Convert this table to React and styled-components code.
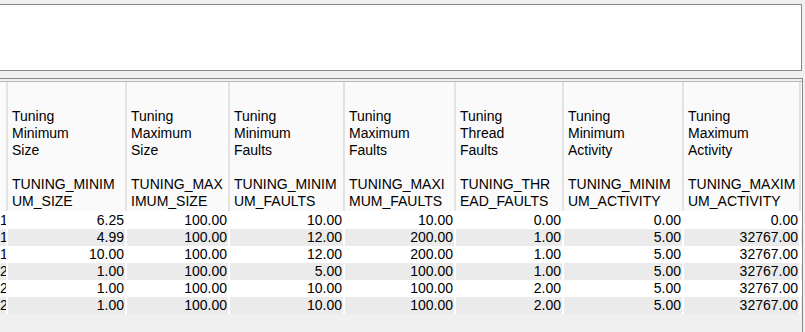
import React from "react";
import styled, { createGlobalStyle } from "styled-components";

const GlobalStyle = createGlobalStyle`
    html, body {
        margin: 0;
        padding: 0;
        background: #f0f0f0;
        overflow: hidden;
    }
    #root {
        width: 805px;
        height: 332px;
    }
`;

const COLUMNS = [
    { width: 8, title: `` },
    { width: 119, title: `Tuning\nMinimum\nSize\n\nTUNING_MINIM\nUM_SIZE` },
    { width: 103, title: `Tuning\nMaximum\nSize\n\nTUNING_MAX\nIMUM_SIZE` },
    { width: 115, title: `Tuning\nMinimum\nFaults\n\nTUNING_MINIM\nUM_FAULTS` },
    { width: 111, title: `Tuning\nMaximum\nFaults\n\nTUNING_MAXI\nMUM_FAULTS` },
    { width: 108, title: `Tuning\nThread\nFaults\n\nTUNING_THR\nEAD_FAULTS` },
    { width: 120, title: `Tuning\nMinimum\nActivity\n\nTUNING_MINIM\nUM_ACTIVITY` },
    { width: 117, title: `Tuning\nMaximum\nActivity\n\nTUNING_MAXIM\nUM_ACTIVITY` },
];

const ROWS = [
    [`1`, `6.25`, `100.00`, `10.00`, `10.00`, `0.00`, `0.00`, `0.00`],
    [`1`, `4.99`, `100.00`, `12.00`, `200.00`, `1.00`, `5.00`, `32767.00`],
    [`1`, `10.00`, `100.00`, `12.00`, `200.00`, `1.00`, `5.00`, `32767.00`],
    [`2`, `1.00`, `100.00`, `5.00`, `100.00`, `1.00`, `5.00`, `32767.00`],
    [`2`, `1.00`, `100.00`, `10.00`, `100.00`, `2.00`, `5.00`, `32767.00`],
    [`2`, `1.00`, `100.00`, `10.00`, `100.00`, `2.00`, `5.00`, `32767.00`],
];

const template = COLUMNS.map((c) => `${c.width}px`).join(` `);

const App = () => {
    return (
        <Page>
            <GlobalStyle />
            <FilterPanel />
            <Grid>
                <Table>
                    <HeaderRow>
                        {COLUMNS.map((col, index) => (
                            <HeaderCell key={index}>{col.title}</HeaderCell>
                        ))}
                    </HeaderRow>
                    {ROWS.map((row, rowIndex) => (
                        <DataRow key={rowIndex} striped={rowIndex % 2 === 1}>
                            {row.map((value, index) => (
                                <DataCell key={index}>{value}</DataCell>
                            ))}
                        </DataRow>
                    ))}
                </Table>
            </Grid>
        </Page>
    );
};

const Page = styled.div`
    display: flex;
    flex-direction: column;
    width: 805px;
    height: 332px;
    padding-top: 4px;
    box-sizing: border-box;
    background: #f0f0f0;
    font-family: "Liberation Sans", Arial, sans-serif;
    font-size: 14px;
    color: #000000;
`;

const FilterPanel = styled.div`
    width: 802px;
    height: 67px;
    box-sizing: border-box;
    background: #ffffff;
    border: 1px solid #828790;
    border-left: none;
    flex-shrink: 0;
`;

const Grid = styled.div`
    flex: 1;
    margin-top: 7px;
    width: 803px;
    box-sizing: border-box;
    border-top: 1px solid #828790;
    border-right: 1px solid #828790;
    padding-top: 2px;
`;

const Table = styled.div`
    display: flex;
    flex-direction: column;
    border-top: 1px solid #b9b9b9;
`;

const HeaderRow = styled.div`
    display: grid;
    grid-template-columns: ${template};
    height: 129px;
    background: #fafafa;
    border-bottom: 1px solid #ffffff;
`;

const HeaderCell = styled.div`
    display: flex;
    flex-direction: column;
    justify-content: flex-end;
    padding: 0 0 1px 4px;
    box-sizing: border-box;
    border-right: 2px solid #e3e3e3;
    white-space: pre-line;
    line-height: 17px;
    overflow: hidden;
`;

const DataRow = styled.div`
    display: grid;
    grid-template-columns: ${template};
    height: 17px;
    background: ${({ striped }) => (striped ? `#ebebeb` : `#ffffff`)};
`;

const DataCell = styled.div`
    box-sizing: border-box;
    padding-right: 1px;
    border-right: 2px solid #ffffff;
    text-align: right;
    line-height: 17px;
    white-space: nowrap;
    overflow: hidden;
`;

export default App;
